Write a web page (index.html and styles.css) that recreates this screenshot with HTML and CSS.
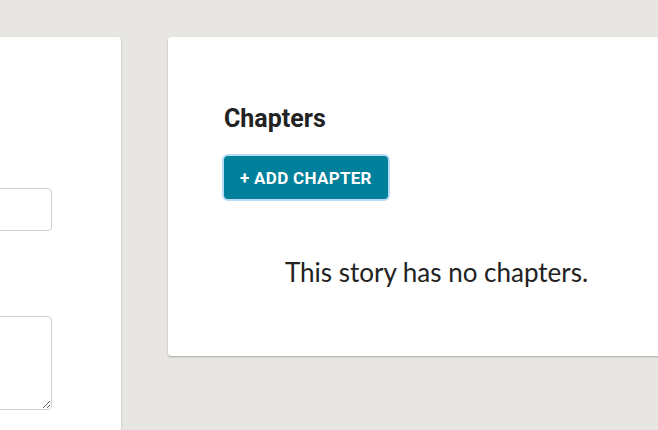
FILE: index.html
```html
<!DOCTYPE html>
<html>
<head>
<meta charset="utf-8">
<link rel="stylesheet" href="styles.css">
</head>
<body>
<div class="page">
  <section class="card story-form">
    <div class="field"><input class="input" type="text"></div>
    <div class="field"><textarea class="textarea"></textarea></div>
  </section>
  <section class="card chapters">
    <h2 class="chapters-title">Chapters</h2>
    <button class="btn-add">+ ADD CHAPTER</button>
    <p class="empty">This story has no chapters.</p>
  </section>
</div>
</body>
</html>
```
FILE: styles.css
```css
html, body {
  margin: 0;
  padding: 0;
  background: #e8e6e2;
  overflow: hidden;
  height: 430px;
}
.page {
  display: flex;
  align-items: flex-start;
  gap: 47px;
  padding-top: 37px;
  width: 1000px;
}
.card {
  background: #fff;
  border-radius: 3px;
  box-shadow: 0 1px 2px rgba(0,0,0,0.28);
}
.story-form {
  width: 300px;
  margin-left: -179px;
  height: 460px;
  box-sizing: border-box;
  padding: 151px 69px 0 20px;
  display: flex;
  flex-direction: column;
  gap: 85px;
}
.input {
  display: block;
  width: 100%;
  box-sizing: border-box;
  height: 43px;
  border: 1px solid #ccd0d6;
  border-radius: 4px;
  background: #fff;
}
.textarea {
  display: block;
  width: 100%;
  box-sizing: border-box;
  height: 94px;
  border: 1px solid #ccd0d6;
  border-radius: 4px;
  background: #fff;
  resize: vertical;
}
.chapters {
  width: 537px;
  box-sizing: border-box;
  padding: 67px 56px 68px;
}
.chapters-title {
  margin: 0;
  font-family: Roboto, "Liberation Sans", sans-serif;
  font-weight: 700;
  font-size: 25px;
  line-height: 29px;
  color: #222;
}
.btn-add {
  display: block;
  margin-top: 23px;
  height: 43px;
  padding: 0 16px;
  background: #00809a;
  color: #fff;
  border: none;
  border-radius: 4px;
  box-shadow: 0 0 0 2px #b9dcf6;
  font-family: Roboto, "Liberation Sans", sans-serif;
  font-weight: 700;
  font-size: 17px;
  letter-spacing: 0.3px;
  cursor: pointer;
}
.empty {
  margin: 57px 0 0;
  text-align: center;
  font-family: Lato, "Open Sans", sans-serif;
  font-size: 26px;
  line-height: 32px;
  color: #222;
}
```
